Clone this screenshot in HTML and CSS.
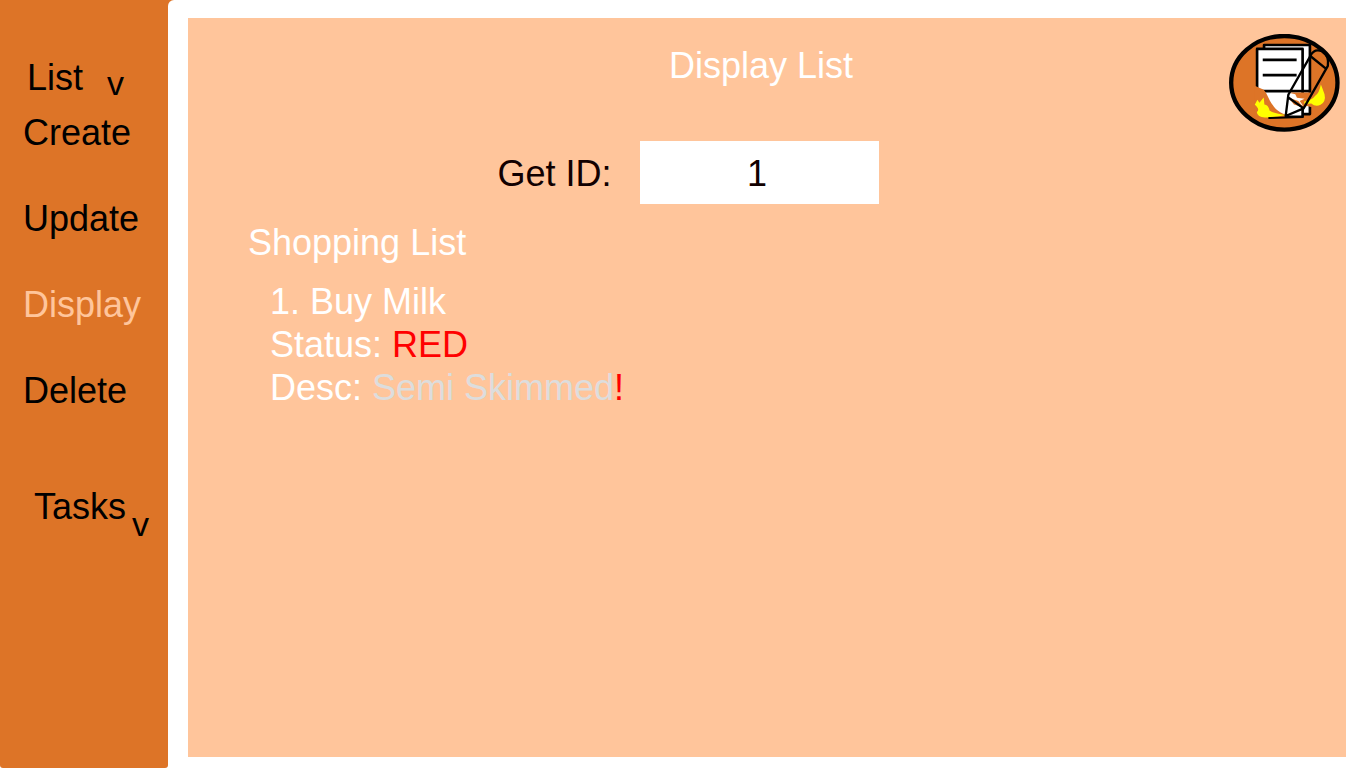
FILE: index.html
```html
<!DOCTYPE html>
<html lang="en">
<head>
<meta charset="utf-8">
<title>Display List</title>
<link rel="stylesheet" href="styles.css">
</head>
<body>
<div class="layout">
  <nav class="sidebar">
    <button class="group group-list" type="button">List <span class="caret">v</span></button>
    <div class="links">
      <a class="link" href="#create">Create</a>
      <a class="link" href="#update">Update</a>
      <a class="link current" href="#display" aria-current="page">Display</a>
      <a class="link" href="#delete">Delete</a>
    </div>
    <button class="group group-tasks" type="button">Tasks <span class="caret">v</span></button>
  </nav>
  <main class="main">
    <section class="panel">
      <header class="header">
        <h1 class="title">Display List</h1>
        <svg class="logo" viewBox="27 26 333 295" role="img" aria-label="Logo">
          <ellipse cx="193" cy="173" rx="160" ry="141" fill="#dd7427" stroke="#000" stroke-width="13"/>
          <path d="M132 69V59H270V267H246" fill="#fff" stroke="#000" stroke-width="8" stroke-linejoin="round"/>
          <path d="M111 71H248V275H111Z" fill="#fff" stroke="#000" stroke-width="8" stroke-linejoin="round"/>
          <path d="M128 104H230M128 150H230M108 198H272" stroke="#000" stroke-width="8" fill="none"/>
          <path d="M104 182L131 194C143 207 146 225 158 240C167 255 184 265 200 270L198 280H104Z" fill="#dd7427"/>
          <path d="M104 239L112 224L118 233L131 217L133 238Q144 238 149 257Q164 265 196 270Q172 276 142 277Q112 280 110 261Q121 253 104 239Z" fill="#ff0"/>
          <path d="M145 279L250 276" stroke="#000" stroke-width="6"/>
          <path d="M207 202H284L300 190L304 240Q288 252 262 243L244 247L224 231L206 216Z" fill="#dd7427"/>
          <path d="M207 203L226 207L231 218L254 221L239 228L250 243L205 219Z" fill="#fff"/>
          <path d="M205 217L235 228L250 247L222 238Z" fill="#dd7427"/>
          <path d="M303 178Q309 193 314 207Q319 229 302 239Q287 246 274 235L255 237L252 230Q276 226 286 212Q298 204 303 178Z" fill="#ff0"/>
          <path d="M205 209L272 91Q283 69 306 78Q329 92 324 122L251 250L197 273ZM205 217L250 249M272 93L320 132" fill="none" stroke="#000" stroke-width="7" stroke-linejoin="round"/>
        </svg>
      </header>
      <form class="lookup">
        <label for="list-id">Get ID:</label>
        <input class="id-input" id="list-id" type="text" value="1">
      </form>
      <h2 class="list-name">Shopping List</h2>
      <div class="item">
        <p>1. Buy Milk</p>
        <p>Status: <span class="alert">RED</span></p>
        <p>Desc: <span class="muted">Semi Skimmed</span><span class="alert">!</span></p>
      </div>
    </section>
  </main>
</div>
</body>
</html>
```
FILE: styles.css
```css
* {
  box-sizing: border-box;
}

body {
  margin: 0;
  font: 36px/43px "Liberation Sans", Arial, sans-serif;
  color: #000;
}

h1, h2, p {
  margin: 0;
  font: inherit;
}

.layout {
  display: flex;
  min-height: 100vh;
  background: linear-gradient(#dd7427, #dd7427) 0 0 / 180px 20px no-repeat #fff;
}

.sidebar {
  flex: 0 0 168px;
  display: flex;
  flex-direction: column;
  padding-top: 56px;
  background: #dd7427;
  border-radius: 0 0 3px 3px;
}

.group {
  display: flex;
  align-items: flex-start;
  height: 43px;
  padding: 0;
  border: 0;
  background: none;
  font: inherit;
  color: inherit;
  cursor: pointer;
}

.group-list {
  gap: 24px;
  padding-left: 27px;
}

.group-list .caret {
  padding-top: 6px;
}

.group-tasks {
  gap: 6px;
  padding-left: 34px;
}

.group-tasks .caret {
  padding-top: 18px;
}

.caret {
  font-size: 34px;
}

.links {
  display: flex;
  flex-direction: column;
  gap: 43px;
  margin: 12px 0 73px;
  padding-left: 23px;
}

.link {
  color: inherit;
  text-decoration: none;
}

.current {
  color: #ffc59b;
}

.main {
  flex: 1;
  display: flex;
  padding: 18px 20px 11px;
  background: #fff;
  border-top-left-radius: 6px;
}

.panel {
  flex: 1;
  background: #ffc59b;
  color: #fff;
}

.header {
  display: grid;
  grid-template-columns: 1fr auto 1fr;
  padding: 16px 12px 0 0;
}

.title {
  grid-column: 2;
  padding-top: 10px;
}

.logo {
  width: 111px;
  height: 98px;
  justify-self: end;
  margin-right: -6px;
}

.lookup {
  display: flex;
  justify-content: center;
  align-items: center;
  gap: 28px;
  margin-top: 9px;
  padding-right: 158px;
  color: #100;
}

.lookup label {
  padding-top: 2px;
}

.id-input {
  width: 239px;
  height: 63px;
  padding: 2px 4px 0 0;
  border: 0;
  border-radius: 0;
  background: #fff;
  color: #100;
  font: inherit;
  text-align: center;
}

.list-name {
  padding: 17px 60px 0;
}

.item {
  padding: 16px 82px 0;
}

.alert {
  color: #f00;
}

.muted {
  color: #ddd;
}
```
